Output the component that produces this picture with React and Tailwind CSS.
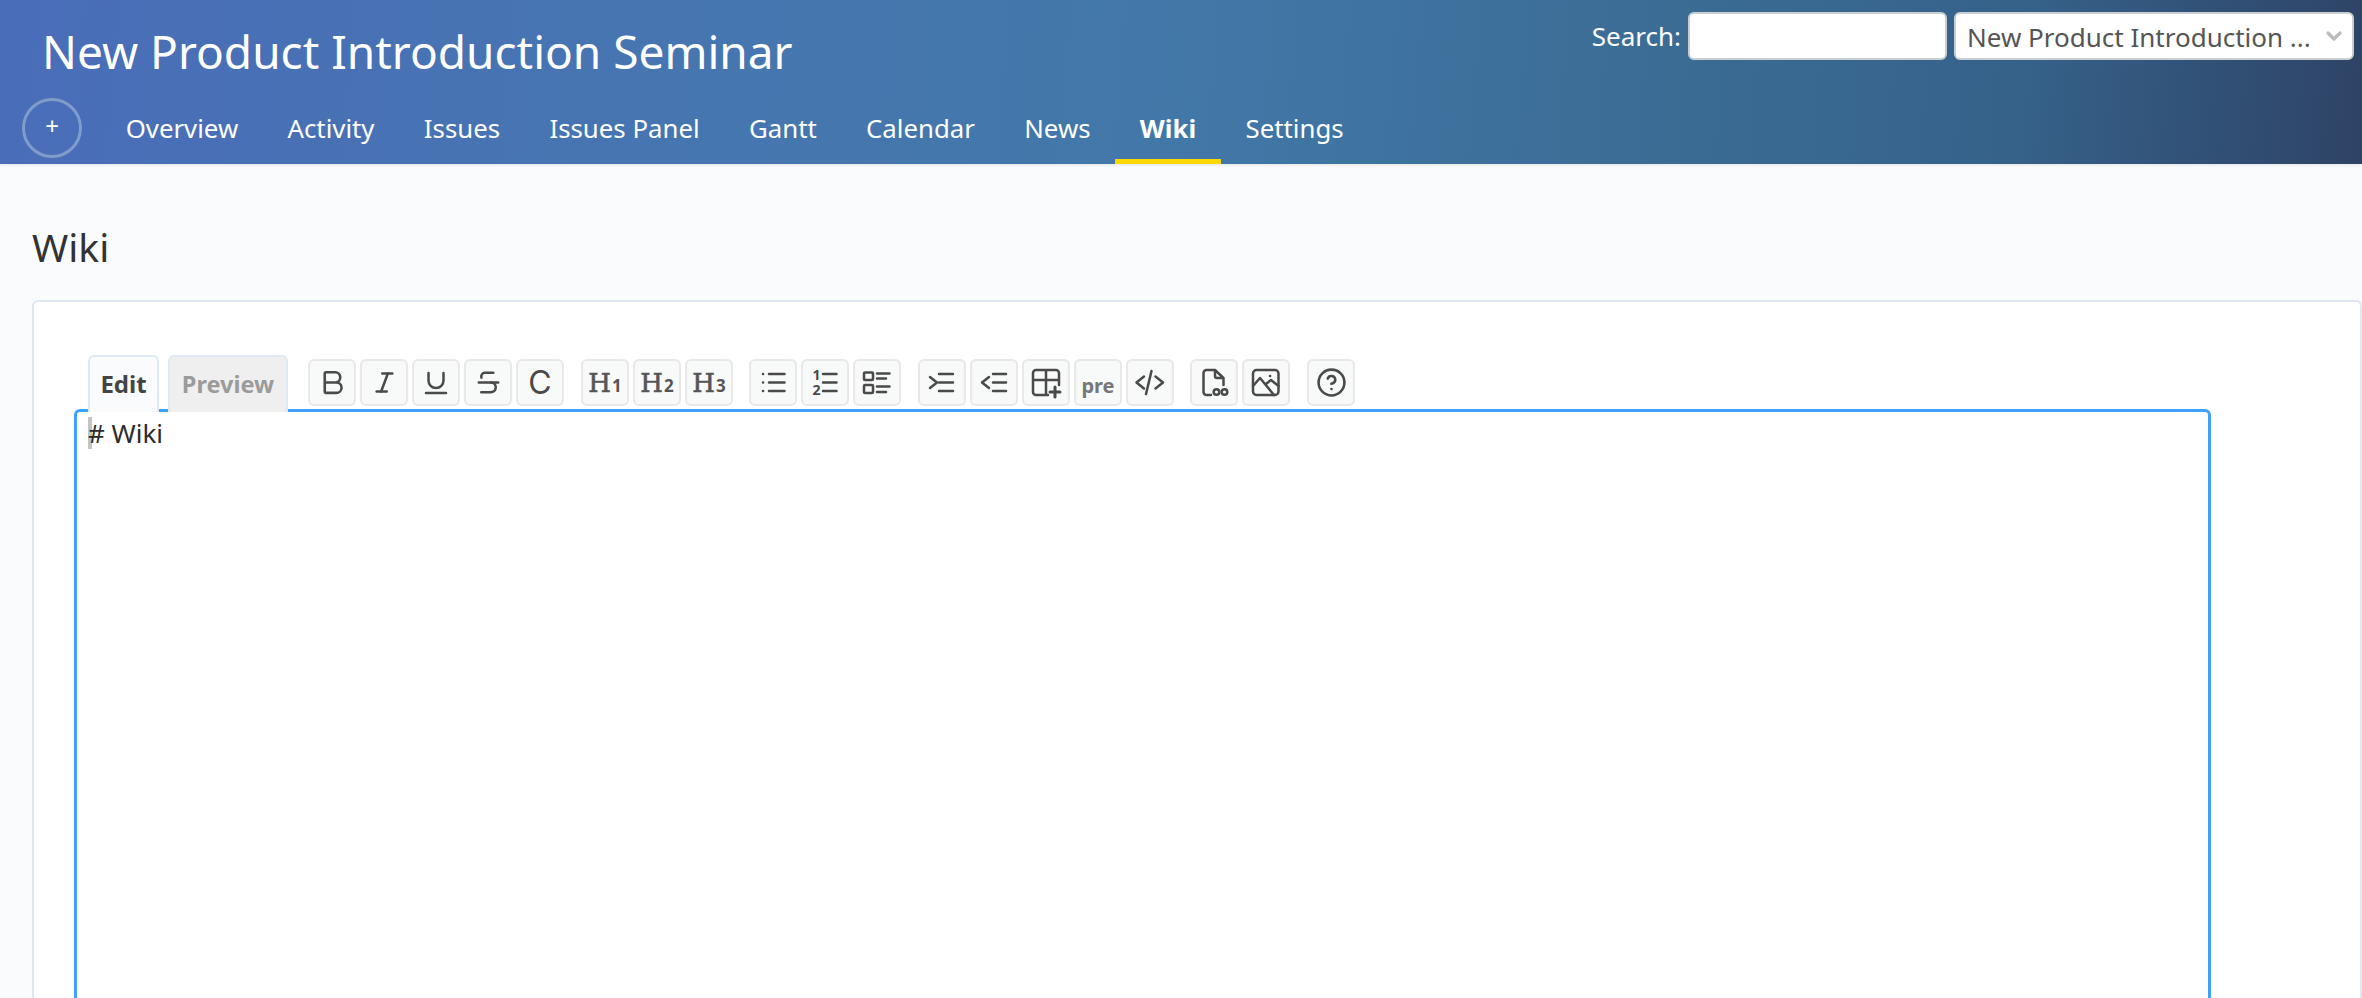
import React from 'react';
import { Bold, Italic, Underline, Strikethrough, CircleHelp, ChevronDown } from 'lucide-react';

const navItems = ['Overview', 'Activity', 'Issues', 'Issues Panel', 'Gantt', 'Calendar', 'News', 'Wiki', 'Settings'];

const Svg = ({ children }) => (
  <svg width="48" height="47" viewBox="0 0 48 47" fill="none" stroke="#4a4a4a" strokeWidth="2.5" strokeLinecap="round" strokeLinejoin="round" className="absolute left-[-2px] top-[-2px]">
    {children}
  </svg>
);

const ToolBtn = ({ children }) => (
  <div className="relative flex h-[47px] w-[48px] items-center justify-center rounded-md border-2 border-[#e8e8e8] bg-[#f8f9f9] text-[#4a4a4a]">
    {children}
  </div>
);

const Heading = ({ n }) => (
  <span className="flex items-baseline font-['DejaVu_Serif',serif] text-[#555]">
    <span className="text-[26px] leading-none [-webkit-text-stroke:0.6px_#555]">H</span>
    <span className="ml-px font-['Noto_Sans',sans-serif] text-[17px] font-bold leading-none">{n}</span>
  </span>
);

const Lines = ({ x1, x2 }) => (
  <path d={`M${x1} 15H${x2}M${x1} 23.5H${x2}M${x1} 32H${x2}`} />
);

const App = () => (
  <div className="flex h-screen flex-col overflow-hidden bg-[#fafbfd] font-['Noto_Sans',sans-serif]">
    <header className="h-[164px] shrink-0 bg-[linear-gradient(95deg,#4a6db9_0%,#4676b0_30%,#4278a8_50%,#3a6b93_72%,#36628a_85%,#2e4366_100%)] shadow-[0_1px_3px_rgba(0,0,0,0.1)]">
      <div className="flex h-[98px] items-start justify-between pl-[42px] pr-2">
        <h1 className="mt-5 text-[46px] font-normal leading-[62px] text-white">New Product Introduction Seminar</h1>
        <div className="mt-3 flex items-center">
          <span className="mr-[7px] text-[26px] leading-[48px] text-white">Search:</span>
          <input className="mr-[7px] h-12 w-[259px] rounded-md border-2 border-[#c9ced3] bg-white" />
          <div className="flex h-12 w-[400px] items-center justify-between rounded-md border-2 border-[#c9ced3] bg-white pl-[11px] pr-[6px] text-[26px] text-[#555]">
            <span className="relative top-px whitespace-nowrap">New Product Introduction ...</span>
            <ChevronDown size={24} strokeWidth={3.2} className="text-[#bbb]" />
          </div>
        </div>
      </div>
      <nav className="flex h-[66px] pl-[22px]">
        <div className="mr-[19px] flex h-[60px] w-[60px] items-center justify-center rounded-full border-[3px] border-[#7f9ccb] pb-1 text-[24px] text-white">+</div>
        {navItems.map((item) => (
          <a
            key={item}
            className={item === 'Wiki'
              ? 'h-[66px] border-b-[5px] border-[#ffd700] px-[24.65px] pt-3 text-[25.8px] font-bold leading-[36px] text-white'
              : 'h-[66px] px-[24.65px] pt-3 text-[25.8px] leading-[36px] text-white'}
          >
            {item}
          </a>
        ))}
      </nav>
    </header>

    <main className="pl-8 pt-[58px]">
      <h2 className="text-[39px] font-normal leading-[49px] text-[#333]">Wiki</h2>
      <div className="mt-[29px] h-[800px] rounded-md border-2 border-[#dfe7f3] bg-white pl-[40px] pt-[53px]">
        <div className="relative z-10 -mb-[3px] ml-[14px] flex h-[57px] items-start">
          <div className="h-[57px] w-[71px] rounded-t-md border-2 border-b-0 border-[#dfe9f6] bg-[#fafbfd] pt-[9px] text-center text-[24px] font-bold leading-[36px] text-[#444]">Edit</div>
          <div className="ml-[9px] h-[57px] w-[120px] rounded-t-md border-2 border-b-0 border-[#dfe9f6] bg-[#efefef] pt-[9px] text-center text-[23.5px] font-bold leading-[36px] text-[#9b9b9b]">Preview</div>

          <div className="ml-5 mt-1 flex gap-1">
            <ToolBtn><Bold size={31} strokeWidth={2} /></ToolBtn>
            <ToolBtn><Italic size={27} strokeWidth={2.2} /></ToolBtn>
            <ToolBtn><Underline size={30} strokeWidth={2} /></ToolBtn>
            <ToolBtn><Strikethrough size={29} strokeWidth={2.1} /></ToolBtn>
            <ToolBtn><span className="font-['Inter',sans-serif] text-[32px] font-normal leading-none">C</span></ToolBtn>
          </div>

          <div className="ml-[17px] mt-1 flex gap-1">
            <ToolBtn><Heading n="1" /></ToolBtn>
            <ToolBtn><Heading n="2" /></ToolBtn>
            <ToolBtn><Heading n="3" /></ToolBtn>
          </div>

          <div className="ml-[16px] mt-1 flex gap-1">
            <ToolBtn>
              <Svg>
                <Lines x1="20" x2="35.5" />
                <path d="M14 15h.1M14 23.5h.1M14 32h.1" />
              </Svg>
            </ToolBtn>
            <ToolBtn>
              <Svg>
                <Lines x1="22" x2="35.5" />
                <text x="11.5" y="21" fontFamily="Noto Sans" fontSize="14" fontWeight="700" fill="#4a4a4a" stroke="none">1</text>
                <text x="11.5" y="36" fontFamily="Noto Sans" fontSize="14" fontWeight="700" fill="#4a4a4a" stroke="none">2</text>
              </Svg>
            </ToolBtn>
            <ToolBtn>
              <Svg>
                <rect x="11" y="13.5" width="9" height="7.5" rx="1" />
                <rect x="11" y="26" width="9" height="8" rx="1" />
                <path d="M24 14.5h12.5M24 19.5h9M24 27.5h12.5M24 33h9" />
              </Svg>
            </ToolBtn>
          </div>

          <div className="ml-[17px] mt-1 flex gap-1">
            <ToolBtn>
              <Svg>
                <path d="M12 18l7 5.5-7 5.5" />
                <Lines x1="21" x2="35" />
              </Svg>
            </ToolBtn>
            <ToolBtn>
              <Svg>
                <path d="M19 18l-7 5.5 7 5.5" />
                <Lines x1="23" x2="36" />
              </Svg>
            </ToolBtn>
            <ToolBtn>
              <Svg>
                <path d="M37 26V14a3 3 0 0 0-3-3H14a3 3 0 0 0-3 3v19a3 3 0 0 0 3 3h12M11 21h26M24 11v25" />
                <path d="M33 28v10M28 33h10" strokeWidth="3" />
              </Svg>
            </ToolBtn>
            <ToolBtn><span className="mt-[6px] text-[20px] font-bold leading-none text-[#777]">pre</span></ToolBtn>
            <ToolBtn>
              <Svg>
                <path d="M18 17.5l-7.5 6 7.5 6M29.5 17.5l7.5 6-7.5 6M25.5 12L20 35" />
              </Svg>
            </ToolBtn>
          </div>

          <div className="ml-[16px] mt-1 flex gap-1">
            <ToolBtn>
              <Svg>
                <path d="M25 11h-8.5a3 3 0 0 0-3 3v19a3 3 0 0 0 3 3H21M25 11l8.5 8v7M25 11v6a2 2 0 0 0 2 2h6.5" />
                <circle cx="26.5" cy="33" r="2.8" />
                <circle cx="34.5" cy="33" r="2.8" />
              </Svg>
            </ToolBtn>
            <ToolBtn>
              <Svg>
                <rect x="11" y="11" width="25.5" height="25" rx="3.5" />
                <path d="M11 27l7-8 14 17M24 25l5-4 7.5 6" />
                <path d="M28 17h.1" />
              </Svg>
            </ToolBtn>
          </div>

          <div className="ml-[17px] mt-1">
            <ToolBtn><CircleHelp size={31} strokeWidth={2} /></ToolBtn>
          </div>
        </div>

        <div className="h-[640px] w-[2137px] rounded-md border-[3px] border-[#3ea1ff] bg-white pl-[11px] pt-[5px]">
          <div className="relative text-[26px] leading-[33px] text-[#2b2b2b]">
            <span className="absolute left-0 top-0 h-8 w-1 bg-[#c4c4c4]" />
            <span className="relative"># Wiki</span>
          </div>
        </div>
      </div>
    </main>
  </div>
);

export default App;
